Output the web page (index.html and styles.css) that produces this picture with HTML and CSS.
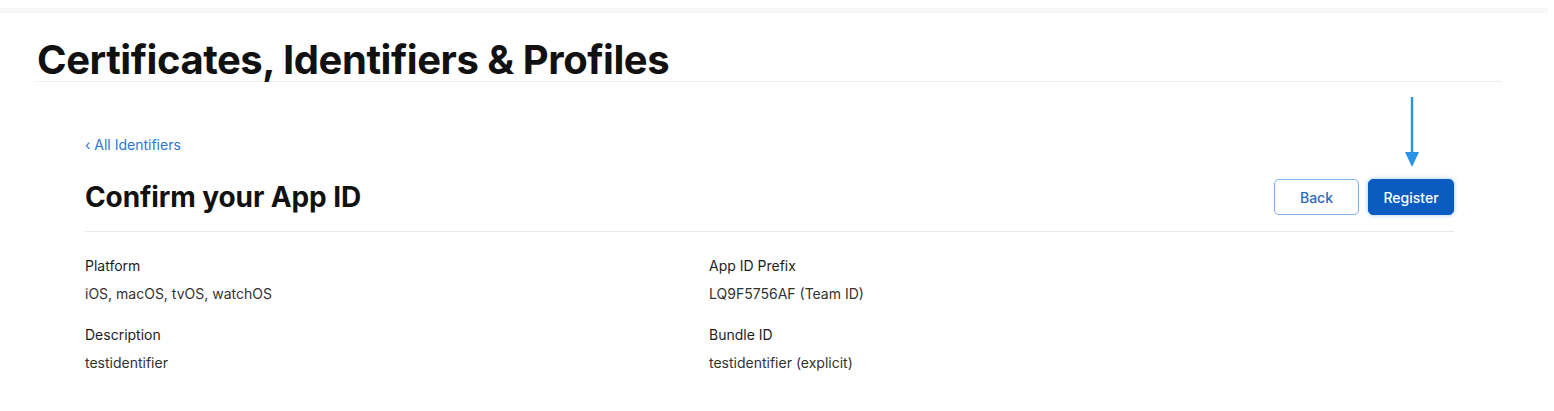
FILE: index.html
```html
<!DOCTYPE html>
<html>
<head>
<meta charset="utf-8">
<link rel="stylesheet" href="styles.css">
</head>
<body>
<div class="topband"></div>
<header class="page-header">
  <h1 class="page-title">Certificates, Identifiers &amp; Profiles</h1>
</header>
<main class="content">
  <a class="back-link" href="#">&#8249; All Identifiers</a>
  <div class="title-row">
    <h2 class="section-title">Confirm your App ID</h2>
    <div class="actions">
      <button class="btn btn-secondary">Back</button>
      <button class="btn btn-primary">Register</button>
      <svg class="annot-arrow" width="16" height="72" viewBox="0 0 16 72">
        <line x1="8" y1="0" x2="8" y2="58" stroke="#2b93e8" stroke-width="2.4"/>
        <polygon points="1,55 15,55 8,70" fill="#2b93e8"/>
      </svg>
    </div>
  </div>
  <div class="details">
    <div class="field">
      <div class="label">Platform</div>
      <div class="value">iOS, macOS, tvOS, watchOS</div>
    </div>
    <div class="field">
      <div class="label">App ID Prefix</div>
      <div class="value">LQ9F5756AF (Team ID)</div>
    </div>
    <div class="field">
      <div class="label">Description</div>
      <div class="value">testidentifier</div>
    </div>
    <div class="field">
      <div class="label">Bundle ID</div>
      <div class="value">testidentifier (explicit)</div>
    </div>
  </div>
</main>
</body>
</html>
```
FILE: styles.css
```css
html, body {
  margin: 0;
  padding: 0;
  background: #ffffff;
  font-family: Inter, "Liberation Sans", Arial, sans-serif;
  color: #1d1d1f;
}
.topband {
  margin-top: 8px;
  height: 5px;
  width: 1548px;
  background: #f7f7f7;
}
.page-header {
  margin-left: 37px;
  width: 1465px;
  border-bottom: 1px solid #ececec;
}
.page-title {
  margin: 0;
  padding-top: 25px;
  font-size: 40px;
  line-height: 43px;
  font-weight: 700;
  letter-spacing: -0.45px;
  color: #111111;
}
.content {
  margin-left: 85px;
  width: 1369px;
}
.back-link {
  display: block;
  margin-top: 54px;
  font-size: 14px;
  line-height: 18px;
  color: #2a77d4;
  text-decoration: none;
}
.title-row {
  display: flex;
  align-items: center;
  justify-content: space-between;
  margin-top: 25px;
  padding-bottom: 16px;
  border-bottom: 1px solid #e9e9e9;
}
.section-title {
  margin: 0;
  font-size: 28px;
  line-height: 36px;
  font-weight: 700;
  letter-spacing: -0.1px;
  color: #111111;
}
.actions {
  position: relative;
  display: flex;
  gap: 9px;
}
.btn {
  height: 36px;
  border-radius: 5px;
  font-family: inherit;
  font-size: 14px;
  font-weight: 500;
  padding: 0;
  cursor: pointer;
}
.btn-secondary {
  width: 85px;
  background: #ffffff;
  border: 1px solid #7faee8;
  color: #2a68c4;
}
.btn-primary {
  width: 86px;
  background: #0b5cc0;
  border: 1px solid #0b5cc0;
  color: #ffffff;
  box-shadow: 0 0 4px rgba(60, 140, 240, 0.5);
}
.annot-arrow {
  position: absolute;
  right: 34px;
  top: -82px;
}
.details {
  display: grid;
  grid-template-columns: 624px 1fr;
  row-gap: 21px;
  margin-top: 24px;
}
.label {
  font-size: 14px;
  line-height: 20px;
  color: #1d1d1f;
}
.value {
  margin-top: 8px;
  font-size: 14px;
  line-height: 20px;
  color: #333333;
}
```
